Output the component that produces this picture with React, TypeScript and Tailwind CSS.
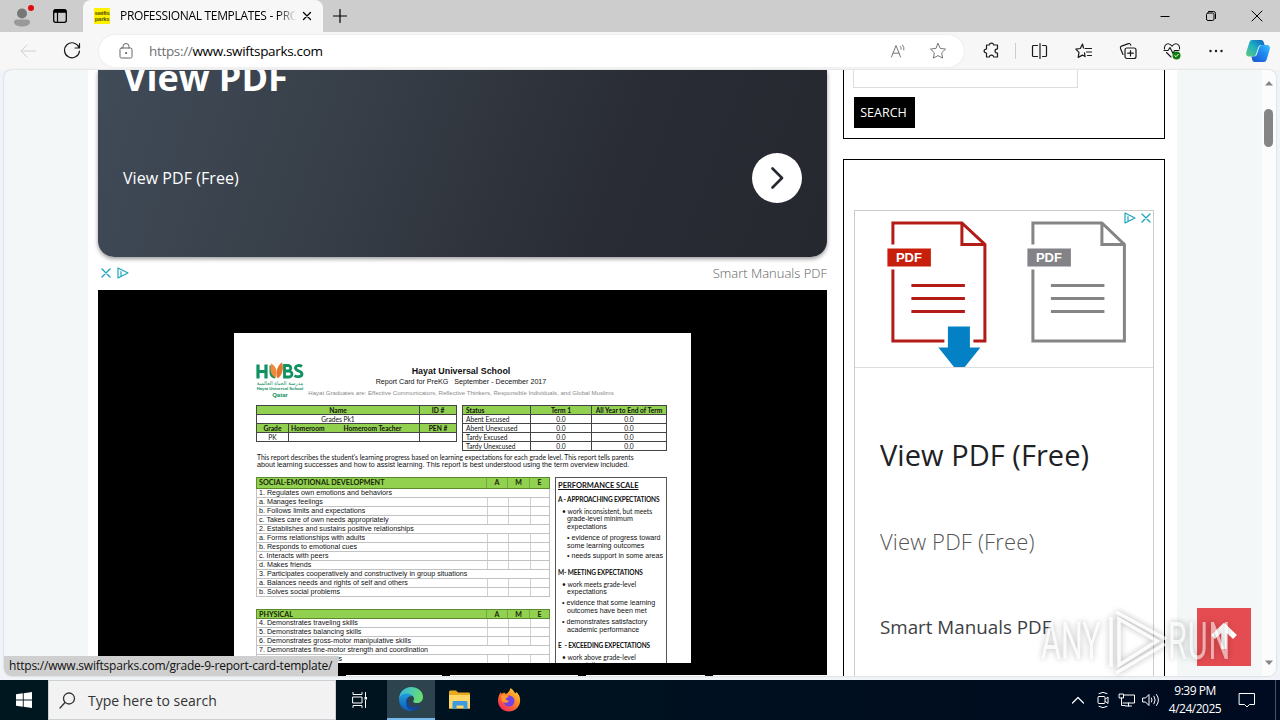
import type { ReactNode } from "react";

const socialRows = [
  { text: "1. Regulates own emotions and behaviors", heading: true },
  { text: "a. Manages feelings" },
  { text: "b. Follows limits and expectations" },
  { text: "c. Takes care of own needs appropriately" },
  { text: "2. Establishes and sustains positive relationships", heading: true },
  { text: "a. Forms relationships with adults" },
  { text: "b. Responds to emotional cues" },
  { text: "c. Interacts with peers" },
  { text: "d. Makes friends" },
  { text: "3. Participates cooperatively and constructively in group situations", heading: true },
  { text: "a. Balances needs and rights of self and others" },
  { text: "b. Solves social problems" },
];

const physicalRows = [
  { text: "4. Demonstrates traveling skills" },
  { text: "5. Demonstrates balancing skills" },
  { text: "6. Demonstrates gross-motor manipulative skills" },
  { text: "7. Demonstrates fine-motor strength and coordination", heading: true },
  { text: "a. Uses fingers and hands" },
];

const attendance = ["Abent Excused", "Abent Unexcused", "Tardy Excused", "Tardy Unexcused"];

const scale = [
  { text: "A - APPROACHING EXPECTATIONS", cls: "mt-[6px] font-['Lato'] font-bold text-[6.5px] tracking-[-0.150px]" },
  { text: "• work inconsistent, but meets", cls: "mt-[3px] pl-[4px] font-['Lato'] text-[6.700px]" },
  { text: "grade-level minimum", cls: "pl-[9px] text-[7.100px]" },
  { text: "expectations", cls: "pl-[9px] text-[7.100px]" },
  { text: "• evidence of progress toward", cls: "mt-[3px] pl-[9px] text-[7.100px]" },
  { text: "some learning outcomes", cls: "pl-[9px] text-[7.100px]" },
  { text: "• needs support in some areas", cls: "mt-[2px] pl-[9px] text-[7.100px]" },
  { text: "M- MEETING EXPECTATIONS", cls: "mt-[9px] font-['Lato'] font-bold text-[6.5px] tracking-[-0.150px]" },
  { text: "• work meets grade-level", cls: "mt-[3px] pl-[4px] font-['Lato'] text-[6.700px]" },
  { text: "expectations", cls: "pl-[9px] text-[7.100px]" },
  { text: "• evidence that some learning", cls: "mt-[3px] pl-[4px] text-[7.100px]" },
  { text: "outcomes have been met", cls: "pl-[9px] text-[7.100px]" },
  { text: "• demonstrates satisfactory", cls: "mt-[3px] pl-[4px] text-[7.100px]" },
  { text: "academic performance", cls: "pl-[9px] text-[7.100px]" },
  { text: "E  - EXCEEDING EXPECTATIONS", cls: "mt-[8px] font-['Lato'] font-bold text-[6.5px] tracking-[-0.150px]" },
  { text: "• work above grade-level", cls: "mt-[3px] pl-[4px] font-['Lato'] text-[6.700px]" },
  { text: "expectations", cls: "pl-[9px] text-[7.100px]" },
];

function Icon({ w, h, className = "", children }: { w: number; h: number; className?: string; children: ReactNode }) {
  return (
    <svg className={`block shrink-0 ${className}`} width={w} height={h} viewBox={`0 0 ${w} ${h}`} fill="none" stroke="currentColor" strokeLinecap="round" strokeLinejoin="round">
      {children}
    </svg>
  );
}

function TabStrip() {
  return (
    <div className="flex h-8 shrink-0 items-center bg-[#cdcdcd] text-black">
      <Icon w={24} h={22} className="ml-[12px]">
        <g stroke="none">
          <circle cx="10" cy="8.5" r="5" fill="#777" />
          <path d="M2 17c0-2 2-2.500 4-2.500h8c2 0 4 .5 4 2.500 0 3-4 4.500-8 4.500S2 20 2 17z" fill="#999" />
          <circle cx="19" cy="3" r="3" fill="#e00b0b" />
        </g>
      </Icon>
      <Icon w={16} h={16} className="ml-[16px]">
        <rect x="1.700" y="1.700" width="12.600" height="12.600" rx="2" strokeWidth="1.300" />
        <path d="M2 3.300h12" strokeWidth="3" strokeLinecap="butt" />
        <path d="M5.500 4v10" strokeWidth="1.200" />
      </Icon>
      <div className="ml-[15px] flex h-full w-[240px] items-center rounded-t-lg bg-[#f7f7f7]">
        <div className="ml-[11px] flex h-4 w-4 flex-col items-center justify-center bg-[#fff200] font-['Liberation_Sans'] text-[6px] font-bold leading-[6px] tracking-[-0.300px] text-[#56520c]">
          <span>swifts</span>
          <span>parks</span>
        </div>
        <div className="ml-[10px] w-[176px] overflow-hidden whitespace-nowrap bg-gradient-to-r from-black from-88% to-[#f7f7f7] to-100% bg-clip-text font-['Open_Sans'] text-[12px] leading-[18px] tracking-[-0.320px] text-transparent">
          PROFESSIONAL TEMPLATES - PRO
        </div>
        <Icon w={10} h={10} className="ml-[6px]">
          <path d="M1.500 1.500l7 7M8.500 1.500l-7 7" strokeWidth="1.300" />
        </Icon>
      </div>
      <Icon w={14} h={14} className="ml-[10px]">
        <path d="M7 .5v13M.5 7h13" strokeWidth="1.200" />
      </Icon>
      <Icon w={12} h={12} className="ml-auto">
        <path d="M1.500 6.500h9" strokeLinecap="butt" />
      </Icon>
      <Icon w={12} h={12} className="ml-[34px]">
        <rect x="1.500" y="3" width="7.500" height="7.500" rx="1.500" />
        <path d="M3.500 1.500h5a2 2 0 0 1 2 2v5" />
      </Icon>
      <Icon w={12} h={12} className="ml-[34px] mr-[17px]">
        <path d="M1 1l10 10M11 1L1 11" />
      </Icon>
    </div>
  );
}

function Toolbar() {
  return (
    <div className="flex h-[38px] shrink-0 items-center bg-[#f7f7f7] text-[#1a1a1a]">
      <Icon w={16} h={14} className="ml-[20px] text-[#cfcfcf]">
        <path d="M15.500 7H1M7 1L1 7l6 6" />
      </Icon>
      <Icon w={18} h={18} className="ml-[27px]">
        <path d="M16 5.500A7.500 7.500 0 1 0 16.500 9M16.500 1.500v4.500h-4.500" strokeWidth="1.200" />
      </Icon>
      <div className="ml-[18px] flex h-[32px] w-[865px] items-center rounded-full bg-white shadow-[0_0_2px_#ddd]">
        <Icon w={14} h={16} className="ml-[20px] text-[#666]">
          <rect x="1" y="5" width="12" height="10" rx="1.500" />
          <path d="M4 5V3.500a3 3 0 0 1 6 0V5" />
          <circle cx="7" cy="10" r=".6" fill="currentColor" />
        </Icon>
        <p className="ml-[16px] font-['Open_Sans'] text-[13.500px] leading-5 tracking-[-0.330px] text-black">
          <span className="text-[#707070]">https://</span>www.swiftsparks.com
        </p>
        <Icon w={17} h={16} className="ml-auto mr-[22px] text-[#777]">
          <path d="M1.500 14L6 2.500 10.500 14M3 10.200h6M10.500 3.500q1 1.200.6 2.800M12.500 2q2 2.200 1.400 5" />
        </Icon>
        <Icon w={18} h={18} className="mr-[17px] text-[#777]">
          <path d="M9 1.500l2.300 4.900 5.200.7-3.800 3.700.9 5.300L9 13.600l-4.600 2.500.9-5.300L1.500 7.100l5.200-.7z" />
        </Icon>
      </div>
      <Icon w={18} h={18} className="ml-[19px]">
        <path d="M3.500 3h2.800c.4-2.600 4-2.600 4.400 0h3.800v3.800c-3.300.1-3.300 4.200 0 4.300v3.900h-3.800c-.4-2.500-4-2.500-4.400 0H3.500v-4C.3 10.700.3 7.200 3.500 7z" strokeWidth="1.200" />
      </Icon>
      <div className="ml-[14px] h-4 w-px bg-[#ccc]" />
      <Icon w={18} h={18} className="ml-[15px]">
        <path d="M9 1.500v15M6.500 3.500h-4a1 1 0 0 0-1 1v9a1 1 0 0 0 1 1h4M11.500 3.500h3a1 1 0 0 1 1 1v9a1 1 0 0 1-1 1h-3" strokeWidth="1.200" />
      </Icon>
      <Icon w={18} h={18} className="ml-[26px]">
        <path d="M10 6.500h6.500M11.500 10h5M12.500 13.500h4M8.500 6L7.500 2 5.300 6.500.8 7.200l3.200 3.200-.8 5 4.300-2.300 2.600 1.500-.6-3.800" strokeWidth="1.200" />
      </Icon>
      <Icon w={18} h={18} className="ml-[26px]">
        <rect x="6" y="6" width="11" height="10.500" rx="2" strokeWidth="1.200" />
        <path d="M11.500 8.500v5.500M8.700 11.200h5.600M4 12.500l-2.500-6q-.6-1.800 1-2.400l7-2.500q1.600-.5 2.300 1.500" strokeWidth="1.200" />
      </Icon>
      <Icon w={18} h={18} className="ml-[26px]">
        <path d="M1.500 7C1 4 3 1.800 5.200 1.800 7 1.800 8 3 9 4.200c1-1.200 2-2.400 3.800-2.400C15.200 1.800 17 4 16.500 7M3.500 10.500L8 15M1 8.500h4l2-3 3 6 1.500-3H16" strokeWidth="1.100" />
        <circle cx="13.500" cy="13.500" r="4" fill="#107c10" stroke="none" />
        <path d="M11.700 13.500l1.300 1.200 2.300-2.400" stroke="#fff" />
      </Icon>
      <Icon w={16} h={4} className="ml-[27px]">
        <g fill="currentColor" stroke="none">
          <circle cx="2.500" cy="2" r="1.200" />
          <circle cx="8" cy="2" r="1.200" />
          <circle cx="13.500" cy="2" r="1.200" />
        </g>
      </Icon>
      <svg className="ml-[21px] block shrink-0" width="26" height="24" viewBox="0 0 26 24">
        <defs>
          <linearGradient id="cpA" x1="0" y1="1" x2="1" y2="0">
            <stop offset="0" stopColor="#62c978" />
            <stop offset=".5" stopColor="#1fb0c4" />
            <stop offset="1" stopColor="#0b5fc0" />
          </linearGradient>
          <linearGradient id="cpB" x1="0" y1="1" x2="1" y2="0">
            <stop offset="0" stopColor="#1b52d0" />
            <stop offset=".6" stopColor="#1f8cf0" />
            <stop offset="1" stopColor="#3ac4ff" />
          </linearGradient>
        </defs>
        <path d="M7 1h9c2 0 2.500 1.500 3 3l.6 2h-3c-2 0-3 1-3.500 3l-2 6c-.6 2-1.500 2.500-3 2.500H4.500c-3 0-4-2-3-5l2.500-8C4.800 2 5.500 1 7 1z" fill="url(#cpA)" />
        <path d="M19 23H10c-2 0-2.500-1-3-3l-.5-2.500h2.500c2 0 2.500-1 3-2.500l2-6c.7-2 1.500-3 3.500-3h4c3 0 4 2 3 5l-2.500 8.500C21.300 22 20.500 23 19 23z" fill="url(#cpB)" />
      </svg>
    </div>
  );
}

function AdMarks({ className = "" }: { className?: string }) {
  return (
    <div className={`flex items-center text-[#1aa5bd] ${className}`}>
      <Icon w={10} h={10}>
        <path d="M1 1l8 8M9 1L1 9" strokeWidth="1.300" />
      </Icon>
      <Icon w={12} h={12}>
        <path d="M1 1v10l10-5zM4 4.500v4" strokeWidth="1.200" />
      </Icon>
    </div>
  );
}

function SkillHeader({ title }: { title: string }) {
  return (
    <div className="flex h-full items-center border border-[#5c8a2e] bg-[#92d050] font-['Lato'] text-[7.200px] font-bold leading-[8px] text-[#16240a] *:h-full">
      <span className="w-[230px] border-r border-[#74a840] pl-[2px] pt-px">{title}</span>
      <span className="w-[21px] border-r border-[#74a840] text-center text-[7px]">A</span>
      <span className="w-[22px] border-r border-[#74a840] text-center text-[7px]">M</span>
      <span className="w-[19px] text-center text-[7px]">E</span>
    </div>
  );
}

function SkillRow({ text, heading }: { text: string; heading?: boolean }) {
  return (
    <div className="flex h-[9px] shrink-0 border-x border-b border-[#c2c2c2] leading-[8px]">
      <span className="w-[230px] shrink-0 whitespace-nowrap pl-[2px] text-[7.150px]">{text}</span>
      {!heading && (
        <>
          <span className="w-[22px] border-x border-[#d0d0d0]" />
          <span className="w-[22px] border-r border-[#d0d0d0]" />
        </>
      )}
    </div>
  );
}

function SchoolLogo() {
  return (
    <div className="flex w-[48px] flex-col items-center font-['Liberation_Sans'] text-[#0f9160]">
      <svg className="block" width="48" height="18" viewBox="0 0 48 18" fill="none">
        <path d="M2 2.500v14M10 2.500v14M2 9.500h8" stroke="#0f9160" strokeWidth="3.200" />
        <path d="M13.500 3v7c0 3.500 2 6 5.500 6.500C20 10 18 5 13.500 3z" fill="#0f9160" />
        <path d="M15 1.500c5 2 6.500 8 5 14.500-5-2-6.500-8-5-14.500z" fill="#f08a3c" />
        <path d="M26 .5c-5 3-6.500 10-4.500 16 5-3 6.500-11 4.500-16z" fill="#e9742b" />
        <path d="M28.500 3.500H32a2.700 2.700 0 0 1 0 5.500h-3.500zM28.500 9H33a3 3 0 0 1 0 6h-4.500z" stroke="#0f9160" strokeWidth="2.800" />
        <path d="M46 4.500c-2-1.500-6.500-1.500-6.500 1.500 0 3.500 6.500 2.500 6.500 6 0 3-5 3.500-7.500 1.500" stroke="#0f9160" strokeWidth="2.800" />
      </svg>
      <span dir="rtl" className="whitespace-nowrap font-['DejaVu_Sans'] text-[5.200px] leading-[6px] tracking-[-0.300px]">مدرسة الحياة العالمية</span>
      <span className="whitespace-nowrap text-[4.200px] font-bold leading-[5px]">Hayat Universal School</span>
      <span className="text-[6px] font-bold leading-[8px]">Qatar</span>
    </div>
  );
}

function ReportCard() {
  return (
    <div className="ml-[136px] h-[330px] w-[457px] overflow-hidden bg-white font-['Liberation_Sans'] text-[#111]">
      <div className="flex h-[72px] pl-[22px] pt-[29px]">
        <SchoolLogo />
        <div className="ml-[5px] flex w-[304px] flex-col items-center whitespace-nowrap pt-[3px]">
          <p className="text-[8.900px] font-bold leading-[12px]">Hayat Universal School</p>
          <p className="text-[7.150px] leading-[11px]">Report Card for PreKG &nbsp; September - December 2017</p>
          <p className="text-[6.070px] leading-[10px] text-[#8a8a8a]">Hayat Graduates are: Effective Communicators, Reflective Thinkers, Responsible Individuals, and Global Muslims</p>
        </div>
      </div>
      <div className="flex items-start gap-[5px] pl-[22px] font-['Lato'] text-[6.650px] leading-[9px]">
        <div className="grid w-[201px] grid-cols-[32px_131px_36px] border border-[#444] text-center *:h-[9px] *:border-b *:border-[#444]">
          <b className="col-span-2 border-r bg-[#92d050]">Name</b>
          <b className="bg-[#92d050]">ID #</b>
          <span className="col-span-2 border-r">Grades Pk1</span>
          <span />
          <b className="border-r bg-[#92d050]">Grade</b>
          <b className="flex gap-[19px] border-r bg-[#92d050] pl-[2px]">
            <span>Homeroom</span>
            <span>Homeroom Teacher</span>
          </b>
          <b className="bg-[#92d050]">PEN #</b>
          <span className="h-[8px]! border-r border-b-0!">PK</span>
          <span className="h-[8px]! border-r border-b-0!" />
          <span className="h-[8px]! border-b-0!" />
        </div>
        <div className="grid w-[205px] grid-cols-[68px_61px_74px] border border-b-0 border-[#444] text-center *:h-[9px] *:border-b *:border-[#444]">
          <b className="border-r bg-[#92d050] pl-[3px] text-left">Status</b>
          <b className="border-r bg-[#92d050]">Term 1</b>
          <b className="bg-[#92d050]">All Year to End of Term</b>
          {attendance.map((label) => [
            <span key={label} className="border-r pl-[3px] text-left">{label}</span>,
            <span key={label + "t"} className="border-r">0.0</span>,
            <span key={label + "y"}>0.0</span>,
          ])}
        </div>
      </div>
      <div className="h-[26px] whitespace-nowrap pl-[23px] pt-[2px] leading-[8px]">
        <p className="font-['Lato'] text-[6.700px]">This report describes the student's learning progress based on learning expectations for each grade level. This report tells parents</p>
        <p className="text-[7.170px]">about learning successes and how to assist learning. This report is best understood using the term overview included.</p>
      </div>
      <div className="flex gap-[5px] pl-[22px]">
        <div className="w-[294px]">
          <div className="h-[12px]"><SkillHeader title="SOCIAL-EMOTIONAL DEVELOPMENT" /></div>
          {socialRows.map((row) => <SkillRow key={row.text} {...row} />)}
          <div className="mt-[12px] h-[10px]"><SkillHeader title="PHYSICAL" /></div>
          {physicalRows.map((row) => <SkillRow key={row.text} {...row} />)}
        </div>
        <div className="h-[230px] w-[112px] whitespace-pre border border-[#555] pl-[2px] pt-[4px] leading-[8px]">
          <p className="font-['Lato'] text-[7.500px] font-bold underline">PERFORMANCE SCALE</p>
          {scale.map((line, i) => (
            <p key={i} className={`leading-[8px] ${line.cls}`}>{line.text}</p>
          ))}
        </div>
      </div>
    </div>
  );
}

function MainColumn() {
  return (
    <div className="flex w-[729px] flex-col">
      <div className="flex h-[187px] shrink-0 flex-col rounded-b-2xl bg-linear-[110deg,#404b58,#373e47_35%,#292c34_70%,#25282f] px-[25px] font-['Open_Sans'] text-white shadow-[0_2px_4px_rgba(0,0,0,0.4)]">
        <p className="-mt-[18px] h-[52px] text-[36px] font-bold leading-[52px]">View PDF</p>
        <div className="mt-[49px] flex h-[50px] items-center justify-between">
          <p className="text-[16px] leading-6 tracking-[0.050px]">View PDF (Free)</p>
          <div className="flex h-[50px] w-[50px] items-center justify-center rounded-full bg-white text-[#25282f]">
            <Icon w={14} h={22}>
              <path d="M2.500 1.500L12 11l-9.500 9.500" strokeWidth="2.600" />
            </Icon>
          </div>
        </div>
      </div>
      <div className="flex h-[33px] shrink-0 items-center justify-between pb-px">
        <AdMarks className="ml-[3px] gap-[6px]" />
        <p className="font-['Open_Sans'] text-[13px] font-light leading-5 text-[#606060]">Smart Manuals PDF</p>
      </div>
      <div className="h-[385px] shrink-0 bg-black pt-[43px]">
        <ReportCard />
      </div>
      <div className="flex h-[2px] gap-[8px] bg-black pl-[248px]">
        <span className="w-[96px] bg-white" />
        <span className="w-[128px] bg-white" />
        <span className="w-[119px] bg-white" />
        <span className="w-[114px] bg-white" />
      </div>
    </div>
  );
}

function PdfDrawing() {
  return (
    <svg className="block" width="298" height="156" viewBox="855.6 211.5 298 156" fill="none">
      <g stroke="#b31b17" strokeWidth="3">
        <path d="M893.500 245v-21.500h69l23 21.500v96.500h-11.500M945 341.500h-51.500V270M962.500 223.500v21.500h23" />
        <path d="M912 286h53.500M912 299h53.500M912 312h53.500" />
      </g>
      <path d="M888 249h43.500v18H888z" fill="#c81e0c" />
      <path d="M948.500 327h22v21h10.500l-16 20h-10l-16-20h9.500z" fill="#0481c4" />
      <g stroke="#858585" strokeWidth="3">
        <path d="M1033.500 245v-21.500h69l22.500 21.500v96.500h-91.500V270M1102.500 223.500v21.500h22.500" />
        <path d="M1051.500 286h53.500M1051.500 299h53.500M1051.500 312h53.500" />
      </g>
      <path d="M1028 249h43.500v18H1028z" fill="#828287" />
      <g fill="#fff" fontFamily="Liberation Sans" fontWeight="700" fontSize="13">
        <text x="896.500" y="262.700">PDF</text>
        <text x="1036.500" y="262.700">PDF</text>
      </g>
    </svg>
  );
}

function Sidebar() {
  return (
    <div className="flex w-[322px] flex-col">
      <div className="h-[69px] shrink-0 border border-t-0 border-black pl-[9px]">
        <div className="h-[18px] w-[225px] border border-t-0 border-[#ddd]" />
        <button className="ml-px mt-[9px] block h-[31px] w-[61px] bg-black pr-[2px] pt-px font-['Open_Sans'] text-[12.500px] text-white">SEARCH</button>
      </div>
      <div className="mt-[20px] h-[520px] shrink-0 border border-black pl-[10px] pt-[50px]">
        <div className="relative h-[480px] w-[300px] border border-[#ccc]">
          <div className="border-b border-[#ddd]"><PdfDrawing /></div>
          <AdMarks className="absolute right-[2px] top-[1px] flex-row-reverse gap-[5px]" />
          <div className="pl-[25px] font-['Open_Sans'] text-[#202124]">
            <p className="mt-[65px] text-[29px] leading-[44px] tracking-[0.050px]">View PDF (Free)</p>
            <p className="mt-[48px] text-[22px] font-light leading-[32px] tracking-[0.150px] text-[#555]">View PDF (Free)</p>
            <p className="mt-[58px] text-[18.800px] leading-[24px] text-[#3c4043]">Smart Manuals PDF</p>
          </div>
        </div>
      </div>
    </div>
  );
}

function Scrollbar() {
  return (
    <div className="ml-auto flex h-full w-[14px] flex-col items-center bg-[#fcfcfc] text-[#858585]">
      <Icon w={10} h={6} className="mt-[10px]">
        <path d="M1 5.500h8L5 1z" fill="currentColor" stroke="none" />
      </Icon>
      <div className="mr-px mt-[23px] h-[38px] w-[9px] rounded-full bg-[#858585]" />
      <Icon w={10} h={6} className="mb-[10px] mt-auto">
        <path d="M1 .5h8L5 5z" fill="currentColor" stroke="none" />
      </Icon>
    </div>
  );
}

function Watermark() {
  return (
    <svg className="absolute left-[1030px] top-[600px] opacity-65 drop-shadow-[0_0_3px_rgba(0,0,0,0.500)]" width="210" height="80" viewBox="0 0 210 80" fill="none">
      <g fill="#fff" fillOpacity=".85" fontFamily="Roboto" fontWeight="400" fontSize="51">
        <text transform="translate(11 59) scale(.6 1)">ANY</text>
        <text transform="translate(138 59) scale(.6 1)" textLength="104">RUN</text>
      </g>
      <g stroke="#fff" strokeWidth="3.500" strokeOpacity=".9">
        <path d="M89 19v46l38-24zM81 17v50M86 12l50 27M86 73l49-29" />
      </g>
    </svg>
  );
}

function Page() {
  return (
    <div className="h-[610px] shrink-0 bg-[#f0f4f9] px-[4px] pb-[4px]">
      <div className="flex h-[606px] overflow-hidden rounded-lg bg-[#f4f7f7] shadow-[0_0_2px_#bbb]">
        <div className="ml-[84px] flex w-[1089px] bg-white pl-[10px]">
          <MainColumn />
          <div className="ml-[16px]">
            <Sidebar />
          </div>
        </div>
        <Scrollbar />
      </div>
    </div>
  );
}

function Taskbar() {
  return (
    <div className="flex h-10 shrink-0 items-center bg-linear-to-r from-[#00171f] to-[#000a20] font-['Open_Sans'] text-white">
      <svg className="ml-[16px] block" width="16" height="16" viewBox="0 0 16 16" fill="#fff">
        <path d="M0 2.300l6.800-1v6.300H0zM7.700 1.200L16 0v7.600H7.700zM0 8.500h6.800v6.300L0 13.800zM7.700 8.500H16V16l-8.300-1.200z" />
      </svg>
      <div className="ml-[16px] flex h-full w-[288px] items-center border border-[#c9cfd2] bg-[#f2f2f2] text-[#333]">
        <Icon w={17} h={17} className="ml-[10px]">
          <circle cx="10" cy="6.500" r="5.500" strokeWidth="1.300" />
          <path d="M6 10.500L1 16" strokeWidth="1.300" />
        </Icon>
        <span className="ml-[12px] pt-px text-[14px] leading-5">Type here to search</span>
      </div>
      <Icon w={18} h={18} className="ml-[15px]">
        <path d="M2 1.500v2h9v-2M2 16.500v-2h9v2M2 6h9v6H2zM14.500 1.500v4M14.500 9.500v7" />
        <rect x="13.500" y="6" width="2.500" height="2.500" fill="#fff" stroke="none" />
      </Icon>
      <div className="ml-[18px] flex h-full w-[48px] items-center justify-center border-b-2 border-[#76b9ed] bg-[#2d434e]">
        <svg className="block" width="24" height="24" viewBox="0 0 24 24">
          <defs>
            <linearGradient id="edA" x1="0" y1="0" x2="1" y2=".3">
              <stop offset="0" stopColor="#2fb5ea" />
              <stop offset="1" stopColor="#67dc74" />
            </linearGradient>
            <linearGradient id="edB" x1="0" y1="0" x2="0" y2="1">
              <stop offset="0" stopColor="#1e9de0" />
              <stop offset="1" stopColor="#0d5bb5" />
            </linearGradient>
          </defs>
          <path d="M0 11.500C.5 5 5.500 0 12 0c7 0 12 4.500 12 10 0 4-3 6-6 6-3.500 0-4.500-1.500-3.500-2.500C16 12 15 7.500 9 7.500c-4 0-7.500 1.500-9 4z" fill="url(#edA)" />
          <path d="M0 12c.5-3.500 4-5.500 8-5.500 3.500 0 5 1.500 5.500 2.500C9 9 7 12 7.500 15c.5 4.500 4.500 7.500 8.500 7-1.500 1.200-3 2-5 2C4 23.500 0 18.500 0 12z" fill="url(#edB)" />
          <path d="M9.500 10.500c-2 3-.5 9.500 6 9.500 3 0 5-1 6.500-2-1.500 3-4.500 5.500-7.500 5.500-5 0-8-4.500-7.500-8.500.2-2 1.200-3.700 2.500-4.500z" fill="#12479b" />
        </svg>
      </div>
      <svg className="ml-[14px] block" width="22" height="20" viewBox="0 0 22 20">
        <path d="M0 2.500C0 1 .5.500 2 .5h5l2 2h10.500c1 0 1.500.5 1.500 1.500v14.500H0z" fill="#e9a91f" />
        <path d="M0 5h21v13.500H0z" fill="#ffd767" />
        <path d="M3.500 19v-6.500c0-1 .5-1.500 1.500-1.500h12c1 0 1.500.5 1.500 1.500V19h-4v-3.500h-7V19z" fill="#3f9be0" />
      </svg>
      <svg className="ml-[26px] block" width="24" height="24" viewBox="0 0 24 24">
        <defs>
          <linearGradient id="ffA" x1="1" y1="0" x2=".2" y2="1">
            <stop offset="0" stopColor="#ffe14a" />
            <stop offset=".45" stopColor="#ff8b1f" />
            <stop offset="1" stopColor="#f5245f" />
          </linearGradient>
        </defs>
        <path d="M13.500 0c3 2 4 4 4.500 5.500l1.500-1.500c3 3 4 6 3.500 10-.7 5.500-5.500 9.500-11 9.500C6 23.500 1 19 1 12.500c0-3 1-6 3-8.500l.5 2c1-1 2-1.500 3-1.500l1 1.500c2-.5 4-2.500 5-6z" fill="url(#ffA)" />
        <circle cx="12" cy="13" r="5.500" fill="#7542e5" />
        <path d="M4 8c3-2 6-1 8 1-2 .3-3 1-3.500 2.500L12 13c-2 3-6.500 2-7.500-1z" fill="#ff9a28" />
      </svg>
      <Icon w={14} h={8} className="ml-auto">
        <path d="M1.500 7L7 1.500 12.500 7" strokeWidth="1.200" />
      </Icon>
      <Icon w={14} h={18} className="ml-[11px]">
        <rect x="2" y="5.500" width="7" height="7" rx="1" />
        <path d="M9.500 8l2.500-2v6.500l-2.500-2M3 2.500q4-2.500 8 0M3 15.500q4 2.500 8 0" />
      </Icon>
      <Icon w={18} h={16} className="ml-[8px]">
        <path d="M6 3h10.500v8H5M10.500 11v3M7.500 14h6M1.500 2h4v4h-4zM3.500 6v7.500H7" strokeLinejoin="miter" />
      </Icon>
      <Icon w={18} h={16} className="ml-[6px]">
        <path d="M1 6h2.500L7 2.500v11L3.500 10H1zM9.500 6q1.200 2 0 4M12 4.200q2.500 3.800 0 7.600M14.500 2.500q4 5.500 0 11" />
      </Icon>
      <div className="ml-[7px] flex w-[56px] flex-col items-center whitespace-nowrap text-[12px] leading-[18px] tracking-[-0.500px]">
        <span>9:39 PM</span>
        <span>4/24/2025</span>
      </div>
      <Icon w={18} h={18} className="ml-[15px] mr-[19px]">
        <path d="M1.500 2.500h15v11h-5l-2.500 2.500L6.500 13.500h-5z" strokeLinejoin="miter" />
      </Icon>
      <div className="mr-[4px] h-full w-px bg-[#4a5260]" />
    </div>
  );
}

export default function App() {
  return (
    <div className="relative flex h-[720px] w-[1280px] flex-col overflow-hidden bg-[#f7f7f7]">
      <TabStrip />
      <Toolbar />
      <Page />
      <Taskbar />
      <div className="absolute left-[4px] top-[656px] h-[20px] w-[334px] whitespace-nowrap rounded-bl-lg bg-[#cfcfcf] pl-[5px] font-['Open_Sans'] text-[12px] leading-[19px] tracking-[-0.220px] text-[#111]">
        https://www.swiftsparks.com/grade-9-report-card-template/
      </div>
      <div className="absolute left-[1197px] top-[608px] flex h-[58px] w-[54px] items-center justify-center bg-[#e54c52] text-white">
        <Icon w={30} h={28}>
          <path d="M4 14L15 3.500 26 14M15 5v21" strokeWidth="5.500" strokeLinecap="butt" strokeLinejoin="miter" />
        </Icon>
      </div>
      <Watermark />
    </div>
  );
}
